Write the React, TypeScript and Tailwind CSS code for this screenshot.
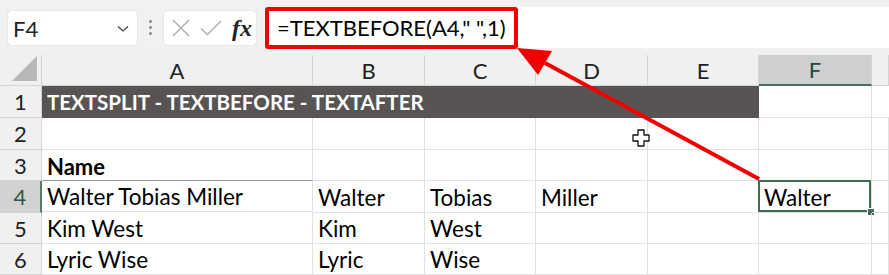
import React from "react";

const cols = ["A", "B", "C", "D", "E", "F", ""];
const font = { fontFamily: "Lato, 'Open Sans', sans-serif" };

type Row = { n: number; cells: string[]; bold?: boolean };

const rows: Row[] = [
  { n: 2, cells: ["", "", "", "", "", "", ""] },
  { n: 3, cells: ["Name", "", "", "", "", "", ""], bold: true },
  { n: 4, cells: ["Walter Tobias Miller", "Walter", "Tobias", "Miller", "", "Walter", ""] },
  { n: 5, cells: ["Kim West", "Kim", "West", "", "", "", ""] },
  { n: 6, cells: ["Lyric Wise", "Lyric", "Wise", "", "", "", ""] },
];

const heights: Record<number, string> = {
  2: "h-[32px]",
  3: "h-[31px]",
  4: "h-[32px]",
  5: "h-[31px]",
  6: "h-[31px]",
};

function Toolbar() {
  return (
    <div className="flex h-[55px] items-start bg-[#f1f1f1] pl-[8px]">
      <div className="mt-[11px] flex h-[34px] w-[129px] items-center justify-between rounded-[4px] bg-white pl-[5px] pr-[8px] shadow-[0_0_0_1px_#e6e6e6]">
        <span className="text-[22px] text-[#222]">F4</span>
        <svg width="12" height="8" viewBox="0 0 12 8" className="mt-[2px]">
          <path d="M1 1.5 L6 6 L11 1.5" stroke="#444" strokeWidth="1.3" fill="none" />
        </svg>
      </div>
      <div className="mt-[20px] flex w-[27px] flex-col items-center gap-[3px]">
        <span className="h-[3px] w-[3px] rounded-full bg-[#888]" />
        <span className="h-[3px] w-[3px] rounded-full bg-[#888]" />
        <span className="h-[3px] w-[3px] rounded-full bg-[#888]" />
      </div>
      <div className="mt-[11px] flex h-[34px] w-[92px] items-center rounded-[4px] bg-white pl-[7px] shadow-[0_0_0_1px_#e6e6e6]">
        <svg width="20" height="20" viewBox="0 0 20 20">
          <path d="M2 2 L18 18 M18 2 L2 18" stroke="#ababab" strokeWidth="1.4" />
        </svg>
        <svg width="24" height="20" viewBox="0 0 24 20" className="ml-[8px]">
          <path d="M2 10.5 L8.5 16.5 L22 3" stroke="#ababab" strokeWidth="1.4" fill="none" />
        </svg>
        <span
          className="ml-[9px] text-[24px] font-bold italic text-[#222]"
          style={{ fontFamily: "'Liberation Serif', serif" }}
        >
          fx
        </span>
      </div>
      <div className="ml-[9px] mt-[7px] flex h-[41px] flex-1 items-center bg-white">
        <div className="flex h-[42px] w-[253px] items-center rounded-[3px] border-[4px] border-[#f00000] pl-[8px]">
          <span className="text-[22px] text-black">=TEXTBEFORE(A4," ",1)</span>
        </div>
      </div>
    </div>
  );
}

export default function App() {
  return (
    <div className="relative h-[275px] w-[889px] overflow-hidden bg-white" style={font}>
      <Toolbar />
      <div className="grid grid-cols-[42px_271px_112px_111px_112px_111px_113px_1fr]">
        {/* header row */}
        <div className="relative h-[31px] border-b border-r border-[#d4d4d4] bg-[#f0f0f0]">
          <svg width="26" height="26" viewBox="0 0 26 26" className="absolute right-[3px] bottom-[3px]">
            <path d="M25 0 L25 25 L0 25 Z" fill="#b8b8b8" />
          </svg>
        </div>
        {cols.map((c, i) =>
          c === "F" ? (
            <div
              key={i}
              className="flex h-[31px] items-center justify-center border-b-[2px] border-r border-b-[#4c6b5a] border-r-[#d4d4d4] bg-[#cfcfcf] text-[22px] text-[#1f4a38]"
            >
              {c}
            </div>
          ) : (
            <div
              key={i}
              className="flex h-[31px] items-center justify-center border-b border-r border-[#d4d4d4] bg-[#f0f0f0] text-[22px] text-[#222]"
            >
              {c}
            </div>
          )
        )}

        {/* row 1 */}
        <div className="flex h-[32px] items-center justify-center border-b border-r border-[#d4d4d4] bg-[#f0f0f0] text-[22px] text-[#222]">
          1
        </div>
        <div className="col-span-5 flex h-[32px] items-center bg-[#575453] pl-[5px] text-[20.5px] font-bold text-white">
          TEXTSPLIT - TEXTBEFORE - TEXTAFTER
        </div>
        <div className="h-[32px] border-b border-r border-[#e1e1e1]" />
        <div className="h-[32px] border-b border-[#e1e1e1]" />

        {rows.map((r) => (
          <React.Fragment key={r.n}>
            <div
              className={`flex ${heights[r.n]} items-center justify-center border-b border-r text-[22px] ${
                r.n === 4
                  ? "border-b-[#d4d4d4] border-r-[2px] border-r-[#5a7a68] bg-[#d2d2d2] text-[#2c5a45]"
                  : "border-[#d4d4d4] bg-[#f0f0f0] text-[#222]"
              }`}
            >
              {r.n}
            </div>
            {r.cells.map((v, i) => (
              <div
                key={i}
                className={`relative flex ${heights[r.n]} items-center border-b border-r border-[#e1e1e1] pl-[5px] pt-[2px] text-black ${
                  r.bold ? "text-[22px] font-bold" : "text-[22.5px]"
                } ${r.n === 4 && i === 0 ? "border-t border-t-[#9a9a9a] -mt-px" : ""}`}
              >
                {v}
                {r.n === 4 && i === 5 && (
                  <>
                    <div className="absolute -left-px -top-px bottom-0 right-0 border-[2px] border-[#3f6c52]" />
                    <div className="absolute -bottom-[3px] -right-[3px] h-[6px] w-[6px] bg-[#3f6c52] ring-1 ring-white" />
                  </>
                )}
              </div>
            ))}
          </React.Fragment>
        ))}
      </div>

      {/* red annotation arrow and mouse cursor */}
      <svg className="pointer-events-none absolute left-0 top-0" width="889" height="275" viewBox="0 0 889 275">
        <line x1="545" y1="63" x2="759" y2="179" stroke="#f00000" strokeWidth="4" />
        <polygon points="517,48 552,51 538,75" fill="#f00000" />
        <path
          d="M638 130 h6 v5 h5 v6 h-5 v5 h-6 v-5 h-5 v-6 h5 Z"
          fill="white"
          stroke="#111"
          strokeWidth="1.3"
          strokeLinejoin="round"
        />
      </svg>
    </div>
  );
}
